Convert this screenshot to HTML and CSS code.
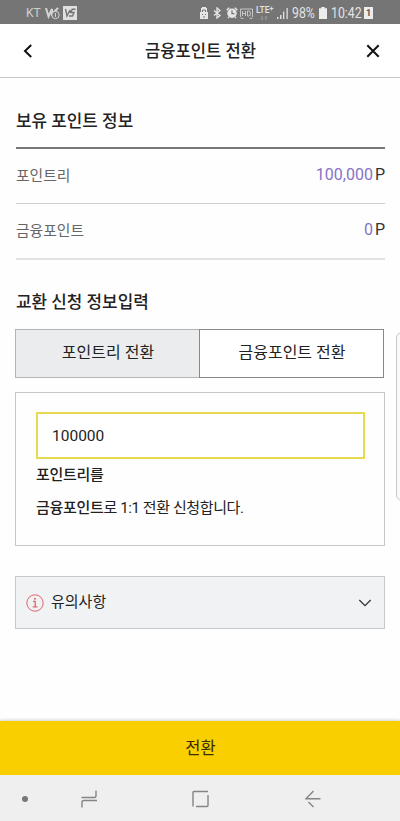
FILE: index.html
```html
<!DOCTYPE html>
<html lang="ko">
<head>
    <meta charset="UTF-8">
    <meta name="viewport" content="width=device-width, initial-scale=1.0">
    <title>금융포인트 전환</title>
    <link rel="stylesheet" href="styles.css">
</head>
<body>
    <div class="status-bar">
        <div class="status-left">
            <span>KT</span>
            <svg width="15" height="14" viewBox="0 0 15 14" fill="none" stroke="#d4d4d4">
                <path d="M1 2l2.500 8.500L7 3v5l6-6" stroke-width="2"/>
                <circle cx="10.500" cy="9" r="3.700" fill="#757575"/>
                <path d="M10.500 7v4"/>
            </svg>
            <svg width="14" height="14" viewBox="0 0 14 14">
                <path fill="#e0e0e0" d="M0 0h14v14H0z"/>
                <path d="M2.500 3l1.500 7L7 4v3M12.500 3.200H9.200L8 6.500h3L9.500 10H6" fill="none" stroke="#757575" stroke-width="1.400"/>
            </svg>
        </div>
        <div class="status-right">
            <svg class="i-save" width="8" height="12" viewBox="0 0 8 12">
                <path fill="#e6e6e6" d="M2 0h4v1h1v4h1v7H0V5h1V1h1z"/>
                <path d="M2.500 5V3h3v2M2 7.500h1m2 0h1M3 10h2" fill="none" stroke="#757575"/>
            </svg>
            <svg class="i-bt" width="8" height="12" viewBox="0 0 8 12" fill="none" stroke="#e6e6e6" stroke-width="1.3">
                <path d="M1 3.5l6 5L4 11V1l3 2.5-6 5"/>
            </svg>
            <svg class="i-alarm" width="12" height="12" viewBox="0 0 12 12">
                <path d="M.7 3.2L3.2.8M11.3 3.2L8.8.8M2 11l1-1M10 11l-1-1" stroke="#e6e6e6" stroke-width="1.5"/>
                <circle cx="6" cy="6.3" r="4.7" fill="#e6e6e6"/>
                <path d="M6 3.3v3.3h2.5" fill="none" stroke="#757575" stroke-width="1.2"/>
            </svg>
            <svg class="i-hd" width="13" height="11" viewBox="0 0 13 11" fill="none" stroke="#d0d0d0" stroke-width=".9">
                <path d="M2.5 3v5M5.5 3v5M2.5 5.5h3M7.5 3v5h1.2q1.8 0 1.8-2.5T8.7 3zM.5 9V1h12v8M.5 10.3h3M9.5 10.3h3"/>
            </svg>
            <span class="lte">LTE<sup>+</sup><svg width="8" height="4" viewBox="0 0 8 4"><path d="M2 0v3.5M1 2.5l1 1 1-1M6 4V.5M5 1.5l1-1 1 1" fill="none" stroke="#a8a8a8" stroke-width=".8"/></svg></span>
            <svg class="i-signal" width="12" height="11" viewBox="0 0 12 11" fill="#dedede">
                <path d="M0 9h1.5v2H0zM3 7h1.5v4H3zM6 3.5h1.3V11H6zM9.5 0h1.3v11H9.5z"/>
            </svg>
            <span class="percent">98%</span>
            <svg class="i-battery" width="8" height="12" viewBox="0 0 8 12">
                <path fill="#ededed" d="M2.3 0h3.4v1.3H8V12H0V1.3h2.3z"/>
            </svg>
            <span class="time">10:42</span>
            <span class="count">1</span>
        </div>
    </div>

    <header class="header">
        <svg class="back" width="10" height="14" viewBox="0 0 10 14" fill="none" stroke="#111" stroke-width="2">
            <path d="M8.2 1L2 7l6.2 6"/>
        </svg>
        <h1>금융포인트 전환</h1>
        <svg class="close" width="14" height="14" viewBox="0 0 14 14" fill="none" stroke="#111" stroke-width="2">
            <path d="M1.3 1.3l11.4 11.4M12.7 1.3L1.3 12.7"/>
        </svg>
    </header>

    <main class="content">
        <h2 class="section-title">보유 포인트 정보</h2>
        <ul class="points">
            <li><span class="label">포인트리</span><span class="value"><em>100,000</em>P</span></li>
            <li><span class="label">금융포인트</span><span class="value"><em>0</em>P</span></li>
        </ul>

        <h2 class="section-title second">교환 신청 정보입력</h2>
        <div class="tabs">
            <button class="tab">포인트리 전환</button>
            <button class="tab active">금융포인트 전환</button>
        </div>

        <div class="card">
            <input type="text" class="amount" value="100000">
            <p><b>포인트리를</b></p>
            <p><b>금융포인트</b>로 1:1 전환 신청합니다.</p>
        </div>

        <div class="notice">
            <svg width="18" height="18" viewBox="0 0 18 18" fill="none" stroke="#e0646c">
                <circle cx="9" cy="9" r="8.2"/>
                <path d="M7 7.3h2.2v5.4M6.7 12.9h4.8" stroke-width="1.3"/>
                <circle cx="9" cy="4.7" r="1" fill="#e0646c" stroke="none"/>
            </svg>
            <span>유의사항</span>
            <svg class="arrow" width="14" height="8" viewBox="0 0 14 8" fill="none" stroke="#333" stroke-width="1.3">
                <path d="M1.3 1L7 6.7 12.7 1"/>
            </svg>
        </div>
    </main>

    <!-- 화면 오른쪽 엣지 패널 핸들 -->
    <div class="edge-handle"></div>

    <button class="submit">전환</button>

    <nav class="nav-bar">
        <span class="dot"></span>
        <svg class="recent" width="17" height="18" viewBox="0 0 17 18" fill="none" stroke="#858585" stroke-width="1.4">
            <path d="M.5 7.5h13q1.5 0 1.5-1.5V.5M16 10.5H2.5Q1 10.5 1 12v5.5"/>
        </svg>
        <svg class="home" width="17" height="18" viewBox="0 0 17 18" fill="none" stroke="#858585" stroke-width="1.4">
            <path d="M1 16.5V2.5Q1 1.5 2 1.5h14M16 5v10.5q0 1-1 1H4"/>
        </svg>
        <svg class="prev" width="16" height="18" viewBox="0 0 16 18" fill="none" stroke="#858585" stroke-width="1.4">
            <path d="M8.5 1L1 8.7h14.5M3.5 12l5 5"/>
        </svg>
    </nav>
</body>
</html>
```

FILE: styles.css
```css
* {
    box-sizing: border-box;
}
body {
    margin: 0;
    height: 821px;
    display: flex;
    flex-direction: column;
    overflow: hidden;
    background: #fefefe;
    color: #222;
    font-family: Roboto, "Noto Sans CJK KR", sans-serif;
}
svg {
    display: block;
    flex: none;
}
h1, h2, p, ul {
    margin: 0;
    padding: 0;
}
button {
    font-family: inherit;
    color: inherit;
    padding: 0;
    border: 0;
}

/* 상태바 */
.status-bar {
    height: 24px;
    flex: none;
    display: flex;
    justify-content: space-between;
    align-items: center;
    padding: 2px 27px 0 26px;
    background: #757575;
    color: #e4e4e4;
}
.status-left, .status-right {
    display: flex;
    align-items: center;
}
.status-left {
    gap: 3px;
    font-size: 12px;
    color: #d0d0d0;
}
.status-left span {
    width: 16px;
}
.i-save {
    margin-right: 5px;
}
.i-bt {
    margin-right: 5px;
}
.i-alarm {
    margin-right: 2px;
}
.i-hd {
    margin-right: 3px;
}
.lte {
    width: 20px;
    height: 16px;
    font-size: 8.5px;
    font-weight: 500;
    line-height: 10px;
    white-space: nowrap;
}
.lte sup {
    font-size: 7px;
    line-height: 0;
    vertical-align: 2px;
}
.lte svg {
    margin: 1px 0 0 4px;
}
.i-signal {
    margin: 0 3px 0 1px;
}
.percent, .time {
    font-size: 14px;
    transform: scaleX(.88);
    transform-origin: left;
}
.percent {
    width: 27px;
}
.i-battery {
    margin-right: 4px;
}
.time {
    width: 33px;
}
.count {
    width: 9px;
    height: 12px;
    background: #ededed;
    color: #555;
    font-size: 9px;
    font-weight: bold;
    line-height: 12px;
    text-align: center;
}

/* 헤더 */
.header {
    height: 54px;
    flex: none;
    display: flex;
    align-items: center;
    justify-content: space-between;
    padding: 0 20px 0 23px;
    border-bottom: 1px solid #c8c8c8;
    background: #fff;
}
.header h1 {
    padding: 0 0 2px 2px;
    font-size: 16.6px;
    font-weight: 500;
}

.content {
    flex: 1;
    padding: 28px 15px 0;
}
.section-title {
    height: 28px;
    padding-left: 1px;
    font-size: 16.9px;
    line-height: 30px;
    font-weight: 500;
}
.section-title.second {
    margin-top: 28px;
    line-height: 29px;
}
.points {
    margin: 13px 0 0 1px;
    border-top: 2px solid #777;
    list-style: none;
}
.points li {
    height: 55px;
    display: flex;
    align-items: center;
    justify-content: space-between;
    border-bottom: 1px solid #cfcfcf;
    font-size: 14.8px;
    color: #666;
}
.points li:last-child {
    height: 56px;
    border-bottom: 2px solid #e2e2e2;
}
.points .label {
    padding-bottom: 4px;
}
.points .value {
    font-size: 16px;
    color: #333;
    padding-bottom: 4px;
}
.points em {
    margin-right: 2px;
    font-style: normal;
    color: #8673c4;
}

.tabs {
    height: 49px;
    margin: 13px 1px 0 0;
    display: flex;
}
.tab {
    flex: 1;
    padding: 0 0 5px 1px;
    border: 1px solid #b4b4b4;
    border-right: 0;
    background: #ebecee;
    font-size: 16px;
}
.tab.active {
    border: 1px solid #888;
    background: #fff;
}

.card {
    height: 154px;
    margin-top: 14px;
    padding: 19px 19px 19px 20px;
    border: 1px solid #c6c6c6;
    font-size: 15px;
}
.amount {
    display: block;
    width: 100%;
    height: 47px;
    padding: 0 14px;
    border: 2px solid #e8d952;
    outline: 0;
    background: #fff;
    color: #222;
    font-family: inherit;
    font-size: 15.5px;
}
.card p {
    line-height: 33px;
    letter-spacing: -.4px;
}
.card b {
    font-weight: 500;
    letter-spacing: -.3px;
}

.notice {
    height: 53px;
    margin-top: 30px;
    padding: 0 12px 0 10px;
    display: flex;
    align-items: center;
    gap: 7px;
    border: 1px solid #c8c9cb;
    background: #f1f2f4;
    font-size: 15px;
}
.notice span {
    padding-bottom: 4px;
}
.notice .arrow {
    margin-left: auto;
}

.edge-handle {
    position: absolute;
    top: 332px;
    right: -8px;
    width: 12px;
    height: 169px;
    border: 1px solid #c8c8c8;
    border-radius: 6px;
    background: #fafafa;
}

.submit {
    height: 54px;
    flex: none;
    padding: 0 0 3px 1px;
    background: #f9cf00;
    box-shadow: 0 -1px 3px rgba(0, 0, 0, .18);
    color: #3a2c05;
    font-size: 16.5px;
}

/* 하단 내비게이션 */
.nav-bar {
    height: 46px;
    flex: none;
    display: flex;
    align-items: center;
    padding: 2px 0 0 22px;
    background: #efefef;
}
.dot {
    width: 6px;
    height: 6px;
    border-radius: 50%;
    background: #777;
}
.recent {
    margin-left: 53px;
}
.home {
    margin-left: 94px;
}
.prev {
    margin-left: 96px;
}
```
